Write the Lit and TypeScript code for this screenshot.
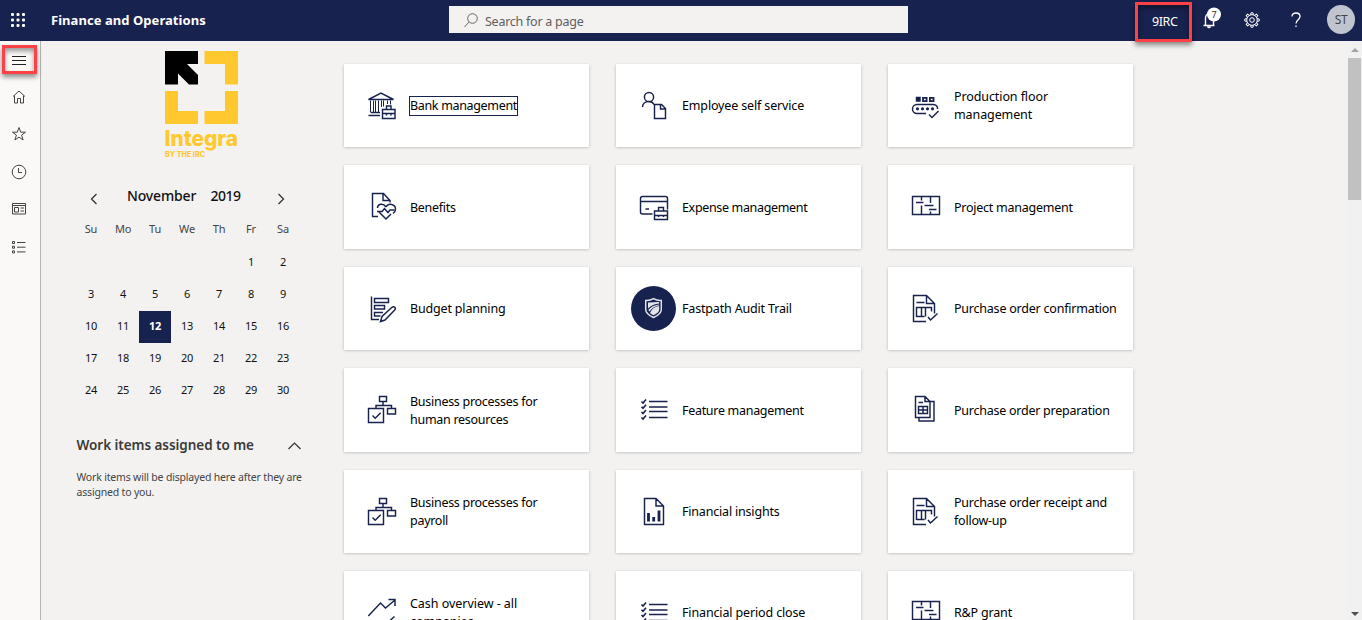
import { LitElement, html, svg, css } from "lit";
import { customElement, property } from "lit/decorators.js";
import { classMap } from "lit/directives/class-map.js";
import { styleMap } from "lit/directives/style-map.js";

const ICONS: Record<string, unknown> = {
  bank: svg`<path d="M9.500 16.500L22 10l12.500 6.500z"/><path d="M11.500 17.500v12M14.500 17.500v12M16.500 17.500v12M19.500 17.500v12M22.500 17.500v6.500M24.500 17.500v6M28.500 17.500v3.500M31.500 17.500v4" stroke-width="1"/><path d="M12 29.500h9M9.500 32.500h11.500"/><path d="M23.500 26.500h12.500v9h-12.500zM27.500 26v-3h4.500v3M23.500 30.500h12.500"/><path d="M27.500 30v2.500M32 30v2.500"/>`,
  benefits: svg`<path d="M19 31.500h-5.500v-23h11l6.500 7v2M24 8.500v7h7"/><path d="M27 22c-3-4.500-8.500-3-8.500 1M27 22c2.500-4.500 9.500-3 9.500 2 0 2-1 3.500-2.500 4.500M20 27l7 7 5-5"/><path d="M18 26.500h5l2.500-3 3.500 4 2-2.500h4.500"/>`,
  budget: svg`<path d="M12.500 10.500v23h7.500"/><path d="M15.500 12.500h14v4h-14zM15.500 19.500h10v3.500h-10zM24 26.500h-8.500v3.500h6"/><path d="M21.500 35.500l1.500-5L33 21.300c2-1.500 4.500.7 2.700 2.700L26 34z"/>`,
  process: svg`<path d="M20.500 9.500h7v5h-7zM24 14.500v4M17 21.500v-3h15.500v3M28.500 21.500h8v5.500h-8zM9.500 21.500h15v14h-15z"/><path d="M13.500 28.500l2.700 2.700 5.500-5.500"/>`,
  cash: svg`<path d="M9.300 26L21.500 13l5 5L36 10M29.500 9.500h6.500v6.500M9.500 36h3M25 36L35.500 26.500"/>`,
  employee: svg`<circle cx="18" cy="14" r="4.600"/><path d="M11.500 24c0-3 2.500-5.500 6.500-5.500 2.500 0 4 1 5 3M23.500 21.500h7l4 4v10h-11zM29.500 21.500v4.500h5"/>`,
  expense: svg`<path d="M21.500 29h-10q-2 0-2-2V13.500q0-2 2-2h23q2 0 2 2v11M9.500 16.500h27M14.500 24h3.500M23.500 26h13v8.500h-13zM27.500 26v-3.500h5V26M23.500 30.500h13M27.500 30v2M32.500 30v2"/>`,
  feature: svg`<path d="M18 14.500h18.500M18 20h18.500M18 24.500h18.500M18 30.500h18.500"/><path stroke-width="1.600" d="M10.500 14.500l1.500 1.500 3-3.500M10.500 19.800l1.500 1.500 3-3.500M10.500 25l1.500 1.500 3-3.500M10.500 30.500l1.500 1.500 3-3.500"/>`,
  shield: svg`<circle cx="22.500" cy="22.500" r="22.500" fill="#18224e" stroke="none"/><path stroke="#e4e5ec" d="M22.500 12.700c2.500 1.500 5 2 7.800 1.800v9c0 4-4 6.300-7.800 8-3.800-1.700-7.800-4-7.800-8v-9c2.800.2 5.300-.3 7.800-1.800z"/><path fill="#e4e5ec" stroke="none" d="M17 16.500c4 .4 8-.8 11.200-.3v1.400c-4.500.4-8 2-11.200 5zM17.300 24c2.500-3 6-5 10.900-5.500v.8c-4.200 1-7.500 3-9.700 6.300zM19.500 26c1.500-3.200 4.500-5.200 8.700-6v3.500c0 2.500-2.500 4-5.700 5.700-1.200-.6-2.500-1.200-3.500-2.200z"/>`,
  production: svg`<path fill="#18224e" d="M13.500 14.500h3.500v3.500h-3.500z"/><path stroke-width="1.800" d="M20 14.800h3.600v3.400H20zM26.900 14.800h3.600v3.400h-3.600z"/><path d="M23 30.500h-9a4.500 4.500 0 0 1 0-9h16.500a4 4 0 0 1 4 4.500"/><g fill="#18224e" stroke="none"><circle cx="14.500" cy="25.800" r="1.600"/><circle cx="19.500" cy="25.800" r="1.600"/><circle cx="24.500" cy="25.800" r="1.600"/><circle cx="29.500" cy="25.800" r="1.600"/></g><path d="M26 31.500l3 3 6.500-6.500"/>`,
  project: svg`<path d="M9.500 11.500h27v18h-27zM13 17.500h7.500M18.500 12v3.500M18.500 20.500v9M21.500 20.500h9M27.500 12v6M26 24.500h7.500M27.500 26.500v3"/>`,
  orderCheck: svg`<path d="M23 35.500H10.500v-26h13l8 8v10M23.500 9.500v8h8"/><path d="M13.500 16.500h8M13.500 31v-9.500h15v4M13.500 30.500h8M18.500 21.500v9M22.500 21.500v9"/><path d="M25 31l2.500 3 7-6.500"/>`,
  orderPrep: svg`<path d="M12.500 9.500h9.500l5 5v16h-14.500zM22 9.500v5h9v19.500h-15v-3.500M15.500 15.500h4.500M15.500 19.500h9v7h-9zM20 19.500v7M15.500 23h9"/>`,
  insights: svg`<path d="M13.500 9.500h11.500l7.500 7.500v18.500h-19zM25 9.500v7.500h7.500"/><path stroke-width="2.800" d="M17.500 24v8.500M22.700 28v4.500M28 21.500v11"/>`,
};

/* icon, label, tracking in px */
const TILES: [string, string, number][] = [
  ["bank", "Bank management", -0.33], ["employee", "Employee self service", -0.15], ["production", "Production floor management", -0.1],
  ["benefits", "Benefits", -0.28], ["expense", "Expense management", -0.34], ["project", "Project management", -0.25],
  ["budget", "Budget planning", -0.17], ["shield", "Fastpath Audit Trail", -0.17], ["orderCheck", "Purchase order confirmation", -0.22],
  ["process", "Business processes for human resources", -0.28], ["feature", "Feature management", -0.3], ["orderPrep", "Purchase order preparation", -0.25],
  ["process", "Business processes for payroll", -0.28], ["insights", "Financial insights", -0.19], ["orderCheck", "Purchase order receipt and follow-up", -0.23],
  ["cash", "Cash overview - all companies", -0.04], ["feature", "Financial period close", -0.14], ["project", "R&P grant", -0.18],
];

@customElement("workspace-tile")
class WorkspaceTile extends LitElement {
  @property() icon = "";
  @property() label = "";
  @property({ type: Number }) tracking = 0;
  @property({ type: Boolean }) active = false;
  static styles = css`
    :host { display: flex; align-items: center; background: #fff; box-shadow: 0 1.200px 3px rgba(0,0,0,.22), 0 0 1px rgba(0,0,0,.1); padding: 0 14px 0 15px; box-sizing: border-box; }
    .icon { width: 45px; height: 45px; flex: none; fill: none; stroke: #18224e; stroke-width: 1.450; overflow: visible; }
    .label { margin: 1.600px 0 0 6px; font-size: 12.500px; line-height: 18px; color: #000; }
    .active { outline: 1px solid #18224e; white-space: nowrap; margin-top: 1px; }
  `;
  render() {
    return html`<svg class="icon" viewBox="0 0 45 45">${ICONS[this.icon]}</svg>
      <span class=${classMap({ label: true, active: this.active })} style=${styleMap({ letterSpacing: `${this.tracking}px` })}>${this.label}</span>`;
  }
}

@customElement("month-calendar")
class MonthCalendar extends LitElement {
  static styles = css`
    :host { display: block; color: #111; }
    .head { display: flex; align-items: center; height: 30px; font-size: 14px; font-weight: 500; letter-spacing: -.15px; }
    .arrow { width: 8px; height: 12px; fill: none; stroke: #333; stroke-width: 1.300; margin-top: 7px; }
    .prev { margin-left: 15px; }
    .month { margin-left: 29px; width: 83.500px; }
    .year { width: 66px; letter-spacing: -.5px; }
    .grid { display: grid; grid-template-columns: repeat(7, 32px); grid-template-rows: 34px; grid-auto-rows: 32px; margin-top: 3px; font-size: 11px; text-align: center; line-height: 30px; letter-spacing: -.2px; }
    .dow { color: #444; line-height: 31px; }
    .today { background: #18224e; color: #fff; font-weight: 700; }
  `;
  render() {
    const days = Array.from({ length: 30 }, (_, i) => i + 1);
    return html`
      <div class="head">
        <svg class="arrow prev" viewBox="0 0 8 12"><path d="M6.500 1L1.500 6l5 5"/></svg>
        <span class="month">November</span><span class="year">2019</span>
        <svg class="arrow" viewBox="0 0 8 12"><path d="M1.500 1l5 5-5 5"/></svg>
      </div>
      <div class="grid">
        ${["Su", "Mo", "Tu", "We", "Th", "Fr", "Sa"].map((d) => html`<span class="dow">${d}</span>`)}
        ${Array.from({ length: 5 }, () => html`<span></span>`)}
        ${days.map((d) => html`<span class=${classMap({ today: d === 12 })}>${d}</span>`)}
      </div>`;
  }
}

@customElement("app-root")
class AppRoot extends LitElement {
  static styles = css`
    :host { display: flex; flex-direction: column; height: 620px; width: 1362px; overflow: hidden; background: #f3f2f1; font-family: "Noto Sans", "Open Sans", sans-serif; position: relative; }
    .top { height: 41px; flex: none; background: #18224e; color: #fff; display: flex; align-items: center; box-sizing: border-box; }
    .waffle { width: 14px; height: 14px; margin-left: 11.400px; margin-top: -1px; fill: #fff; }
    .brand { margin-left: 25.600px; width: 398px; font-size: 13px; font-weight: 700; letter-spacing: .05px; white-space: nowrap; margin-top: -1px; }
    .search { width: 459px; height: 27px; margin-top: -2px; background: #f3f2f1; display: flex; align-items: center; color: #605e5c; font-size: 12.500px; letter-spacing: -.25px; box-sizing: border-box; padding: 3px 0 0 15px; }
    .search svg { width: 14px; height: 15px; margin-right: 7px; margin-top: -1px; fill: none; stroke: #666; }
    .company { margin-left: 244px; width: 50px; font-size: 12.500px; letter-spacing: -.4px; padding-top: 2px; }
    .glyph { flex: none; fill: none; stroke: #fff; }
    .bell { width: 24px; height: 26px; margin-top: -4px; }
    .gear { width: 16px; height: 16px; margin-left: 18px; margin-top: -1px; }
    .help { width: 12px; height: 16px; margin-left: 30px; margin-top: -1px; stroke-width: 1.300; }
    .avatar { margin-left: 25px; width: 28px; height: 29px; border-radius: 50%; background: #c0c4cf; color: #444; font-size: 12px; line-height: 29px; text-align: center; letter-spacing: -.3px; margin-top: -2px; }
    .badge { font-size: 9px; fill: #333; stroke: none; }
    .body { flex: 1; display: flex; min-height: 0; }
    .nav { width: 41px; flex: none; background: #faf9f8; border-right: 1px solid #b5b4b3; display: flex; flex-direction: column; align-items: center; gap: 21.500px; padding: 10px 3px 0 0; box-sizing: border-box; }
    .nav svg { width: 16px; height: 16px; flex: none; fill: none; stroke: #444; overflow: visible; }
    .side { width: 303px; flex: none; box-sizing: border-box; padding: 8px 0 0 34px; }
    .logo { display: block; width: 76px; height: 110px; margin-left: 89px; overflow: visible; }
    .logo text { font-family: Inter, sans-serif; font-weight: 800; fill: #ffc82e; }
    .cal { margin-top: 21px; }
    .work { display: flex; align-items: center; justify-content: space-between; width: 224px; margin: 23px 0 0 1.500px; height: 30px; color: #3b3a39; font-size: 13.500px; font-weight: 600; letter-spacing: -.05px; white-space: nowrap; }
    .work svg { width: 13px; height: 8px; fill: none; stroke: #333; stroke-width: 1.200; margin-top: 2px; }
    .note { margin: 10px 0 0 1.500px; width: 240px; font-size: 10.500px; line-height: 15px; color: #444; letter-spacing: -.18px; }
    .tiles { display: grid; grid-template-columns: repeat(3, 245px); grid-auto-rows: 83.400px; gap: 18px 27px; padding-top: 23px; }
    .bar { margin-left: auto; width: 16px; background: #f1f1f1; display: flex; flex-direction: column; align-items: center; box-sizing: border-box; padding: 7px 0 4px 1px; }
    .bar svg { width: 8px; height: 4px; }
    .thumb { width: 13px; height: 142px; background: #c1c1c1; margin: 6px 0 auto; }
    .mark { position: absolute; border: 3px solid #fd4144; box-sizing: border-box; box-shadow: 0 3px 5px rgba(0,0,0,.45), inset 0 3px 5px rgba(0,0,0,.4); }
    .mark-menu { left: 2px; top: 45px; width: 35px; height: 29px; }
    .mark-company { left: 1135px; top: 2px; width: 57px; height: 40px; }
  `;
  render() {
    const teeth = Array.from({ length: 8 }, (_, i) => svg`<path d="M6.600 2.800L7 .8h2l.4 2" transform="rotate(${i * 45} 8 8)"/>`);
    return html`
      <header class="top">
        <svg class="waffle" viewBox="0 0 14 14">${[0, 5.5, 11].map((y) => [0, 5.5, 11].map((x) => svg`<rect x=${x} y=${y} width="3" height="3" rx="1"/>`))}</svg>
        <span class="brand">Finance and Operations</span>
        <div class="search"><svg viewBox="0 0 14 15"><circle cx="8.500" cy="5.500" r="4.800"/><path d="M5 9L.5 14"/></svg>Search for a page</div>
        <span class="company">9IRC</span>
        <svg class="glyph bell" viewBox="0 0 24 26"><path stroke-width="1.400" d="M1.500 19.500h11M3.500 19v-7c0-3 2-4.500 4-4.500M11.500 13v6M5.500 20.500q1.500 2 3 0"/><circle cx="12" cy="8.500" r="7" fill="#fff" stroke="none"/><text class="badge" x="9.500" y="11.700">7</text></svg>
        <svg class="glyph gear" viewBox="0 0 16 16">${teeth}<circle cx="8" cy="8" r="5.300"/><circle cx="8" cy="8" r="2.300"/></svg>
        <svg class="glyph help" viewBox="0 0 12 16"><path d="M2 4.500C2 2 3.800 1 6 1s4 1.200 4 3.500c0 3-4 3.500-4 7"/><path d="M6 13.500v1.500"/></svg>
        <span class="avatar">ST</span>
      </header>
      <div class="body">
        <nav class="nav">
          <svg viewBox="0 0 16 16"><path stroke="#222" stroke-width="1.200" d="M1 5.500h14M1 9.500h14M1 13.500h14"/></svg>
          <svg viewBox="0 0 16 16"><path d="M2 7.500L8 2l6 5.500M3.500 6.500v7.500h3V9.500h3V14h3V6.500" /></svg>
          <svg viewBox="0 0 16 16"><path d="M8 1.500l1.700 4.700h4.800l-3.900 2.900 1.500 4.900L8 11.100 3.900 14l1.500-4.900L1.500 6.200h4.800z"/></svg>
          <svg viewBox="0 0 16 16"><circle cx="8" cy="8" r="6.800"/><path d="M7.500 4v4.500H11"/></svg>
          <svg viewBox="0 0 16 16"><path d="M1.500 2.500h13v10.500h-13zM1.500 4.500h13M3.500 6.500h4v4.500h-4zM9.500 7h3.500M9.500 10h3.500"/></svg>
          <svg viewBox="0 0 16 16"><path d="M1.500 2.500h2v2h-2zM1.500 7.200h2v2h-2zM1.500 11.900h2v2h-2zM6 3.500h8.500M6 8.200h8.500M6 12.900h8.500"/></svg>
        </nav>
        <aside class="side">
          <svg class="logo" viewBox="0 0 76 110">
            <path d="M1 2h33v13H23l11 11v9.500H25L14 24.500V35.500H1z"/>
            <path fill="#ffc82e" d="M40.500 2H74v33.500H61V15H40.500zM1 42h13v20h20v13H1zM61 42h13v33H40.500V62H61z"/>
            <text x="0.500" y="97" font-size="21.500" textLength="73.500" lengthAdjust="spacingAndGlyphs">Integra</text>
            <text x="1" y="107.700" font-size="7" textLength="40" lengthAdjust="spacingAndGlyphs">BY THE IRC</text>
          </svg>
          <month-calendar class="cal"></month-calendar>
          <div class="work"><span>Work items assigned to me</span><svg viewBox="0 0 13 8"><path d="M.5 7L6.500 1l6 6"/></svg></div>
          <div class="note">Work items will be displayed here after they are assigned to you.</div>
        </aside>
        <main class="tiles">
          ${TILES.map(([icon, label, tracking], i) => html`<workspace-tile .icon=${icon} .label=${label} .tracking=${tracking} .active=${i === 0}></workspace-tile>`)}
        </main>
        <div class="bar">
          <svg viewBox="0 0 8 4"><path fill="#a3a3a3" d="M0 4l4-4 4 4z"/></svg>
          <div class="thumb"></div>
          <svg viewBox="0 0 8 4"><path fill="#505050" d="M0 0h8L4 4z"/></svg>
        </div>
      </div>
      <div class="mark mark-menu"></div>
      <div class="mark mark-company"></div>`;
  }
}
